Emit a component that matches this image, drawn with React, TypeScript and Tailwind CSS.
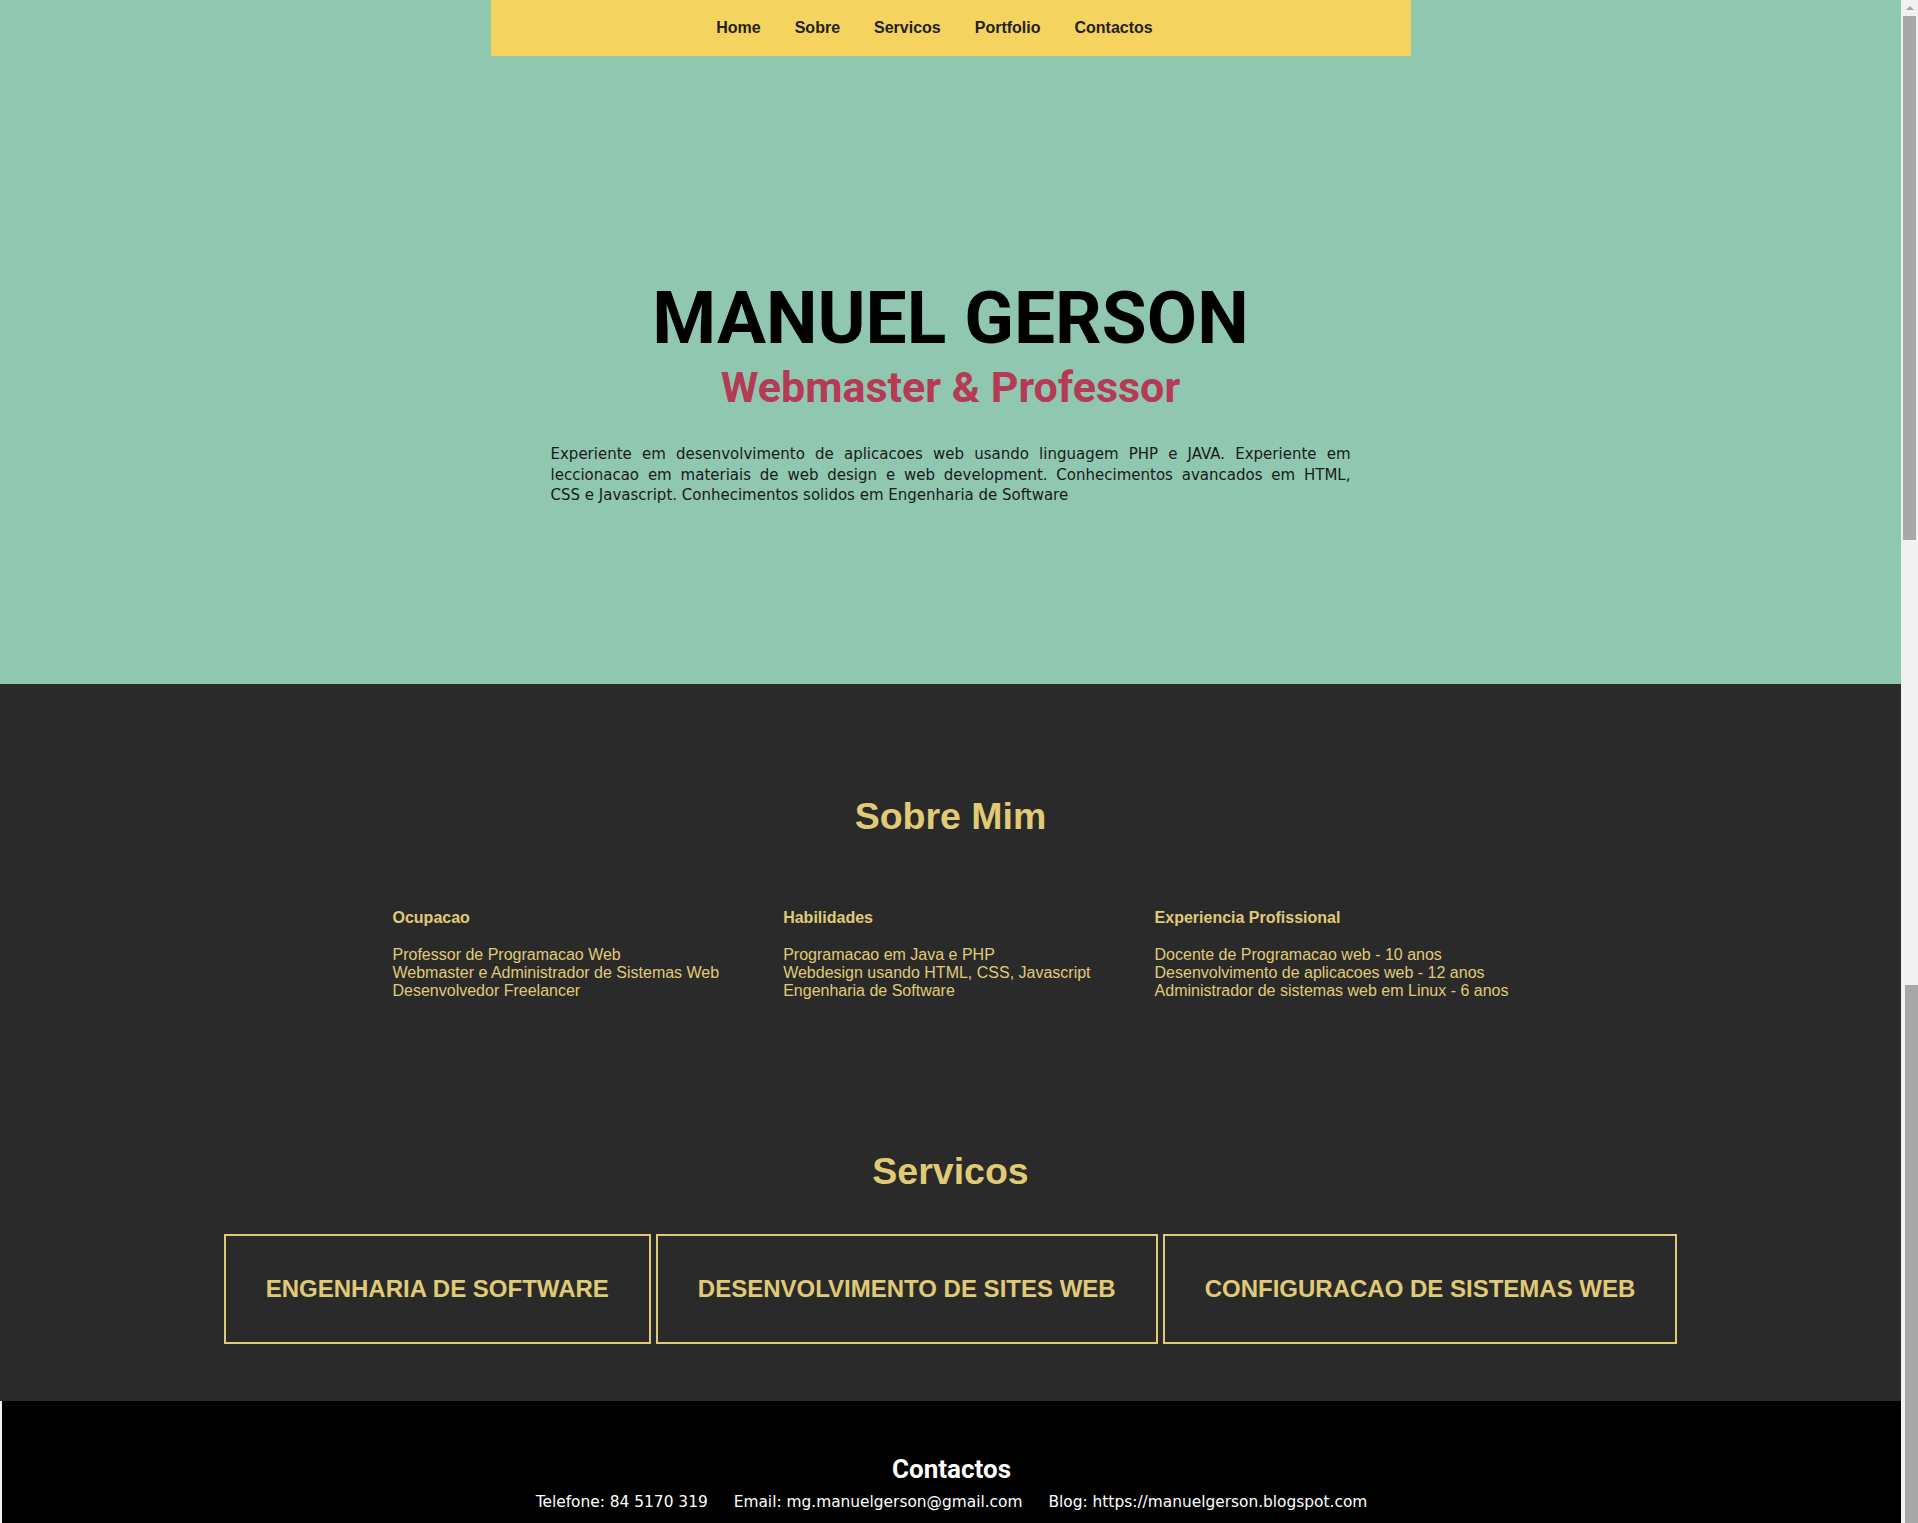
import React from "react";

const navLinks = ["Home", "Sobre", "Servicos", "Portfolio", "Contactos"];

const aboutColumns = [
  {
    title: "Ocupacao",
    items: [
      "Professor de Programacao Web",
      "Webmaster e Administrador de Sistemas Web",
      "Desenvolvedor Freelancer",
    ],
  },
  {
    title: "Habilidades",
    items: [
      "Programacao em Java e PHP",
      "Webdesign usando HTML, CSS, Javascript",
      "Engenharia de Software",
    ],
  },
  {
    title: "Experiencia Profissional",
    items: [
      "Docente de Programacao web - 10 anos",
      "Desenvolvimento de aplicacoes web - 12 anos",
      "Administrador de sistemas web em Linux - 6 anos",
    ],
  },
];

const services = [
  "ENGENHARIA DE SOFTWARE",
  "DESENVOLVIMENTO DE SITES WEB",
  "CONFIGURACAO DE SISTEMAS WEB",
];

const Hero: React.FC = () => (
  <section className="h-[684px] bg-[#8fc7b0] flex flex-col">
    <nav className="h-[56px] w-[920px] mx-auto bg-[#f4d35e] flex items-center justify-center gap-[34px] pr-[32px] font-['Liberation_Sans',Arial,sans-serif] font-bold text-[16px] text-[#222]">
      {navLinks.map((link) => (
        <a key={link} href="#" className="leading-[18px]">
          {link}
        </a>
      ))}
    </nav>

    <h1 className="mt-[226px] text-center font-['Roboto',sans-serif] font-bold text-[73px] leading-none text-black">
      MANUEL GERSON
    </h1>
    <h2 className="mt-[11px] text-center font-['Roboto',sans-serif] font-bold text-[43px] leading-none text-[#b53a55]">
      Webmaster &amp; Professor
    </h2>

    <p className="mt-[35px] w-[800px] mx-auto font-['DejaVu_Sans',sans-serif] text-[15px] leading-[20.7px] text-[#1a1a1a]">
      <span className="block whitespace-nowrap text-justify [text-align-last:justify]">
        Experiente em desenvolvimento de aplicacoes web usando linguagem PHP e JAVA. Experiente em
      </span>
      <span className="block whitespace-nowrap text-justify [text-align-last:justify]">
        leccionacao em materiais de web design e web development. Conhecimentos avancados em HTML,
      </span>
      <span className="block">
        CSS e Javascript. Conhecimentos solidos em Engenharia de Software
      </span>
    </p>
  </section>
);

const About: React.FC = () => (
  <div className="pt-[114px] flex flex-col">
    <h2 className="text-center font-bold text-[37.5px] leading-none">Sobre Mim</h2>
    <div className="mt-[73px] flex justify-center gap-[64px]">
      {aboutColumns.map((col) => (
        <div key={col.title} className="flex flex-col">
          <h4 className="font-bold text-[16px] leading-[18px]">{col.title}</h4>
          <ul className="mt-[19px] text-[16px] leading-[18.4px]">
            {col.items.map((item) => (
              <li key={item}>{item}</li>
            ))}
          </ul>
        </div>
      ))}
    </div>
  </div>
);

const Services: React.FC = () => (
  <div className="pt-[152px] pb-[56px] flex flex-col">
    <h2 className="text-center font-bold text-[37.5px] leading-none">Servicos</h2>
    <div className="mt-[44px] flex justify-center gap-[5px]">
      {services.map((service) => (
        <div
          key={service}
          className="border-2 border-[#e0ca76] p-[40px] font-bold text-[24px] leading-[26px] whitespace-nowrap"
        >
          {service}
        </div>
      ))}
    </div>
  </div>
);

const Footer: React.FC = () => (
  <footer className="flex-1 bg-black border-l-2 border-[#f1f1f1] text-white flex flex-col items-center pt-[55px]">
    <h3 className="font-['Roboto',sans-serif] font-bold text-[26px] leading-none">Contactos</h3>
    <div className="mt-[10px] flex justify-center gap-[26px] font-['DejaVu_Sans',sans-serif] text-[15.4px] leading-[20px]">
      <span>Telefone: 84 5170 319</span>
      <span>Email: mg.manuelgerson@gmail.com</span>
      <span>Blog: https://manuelgerson.blogspot.com</span>
    </div>
  </footer>
);

const Scrollbar: React.FC = () => (
  <aside className="w-[17px] bg-[#f1f1f1] flex flex-col items-center">
    <div className="h-[16px] flex items-center justify-center">
      <div className="w-0 h-0 border-l-[4px] border-r-[4px] border-b-[4px] border-l-transparent border-r-transparent border-b-[#a3a3a3]" />
    </div>
    <div className="w-[13px] h-[524px] bg-[#a8a8a8]" />
    <div className="h-[445px]" />
    <div className="w-[13px] ml-[3px] flex-1 bg-[#a8a8a8]" />
  </aside>
);

const App: React.FC = () => {
  return (
    <div className="h-[1523px] overflow-hidden flex">
      <main className="flex-1 min-w-0 flex flex-col">
        <Hero />
        <section className="h-[717px] bg-[#2a2a2a] text-[#e0ca76] font-['Liberation_Sans',Arial,sans-serif] flex flex-col">
          <About />
          <Services />
        </section>
        <Footer />
      </main>
      <Scrollbar />
    </div>
  );
};

export default App;
